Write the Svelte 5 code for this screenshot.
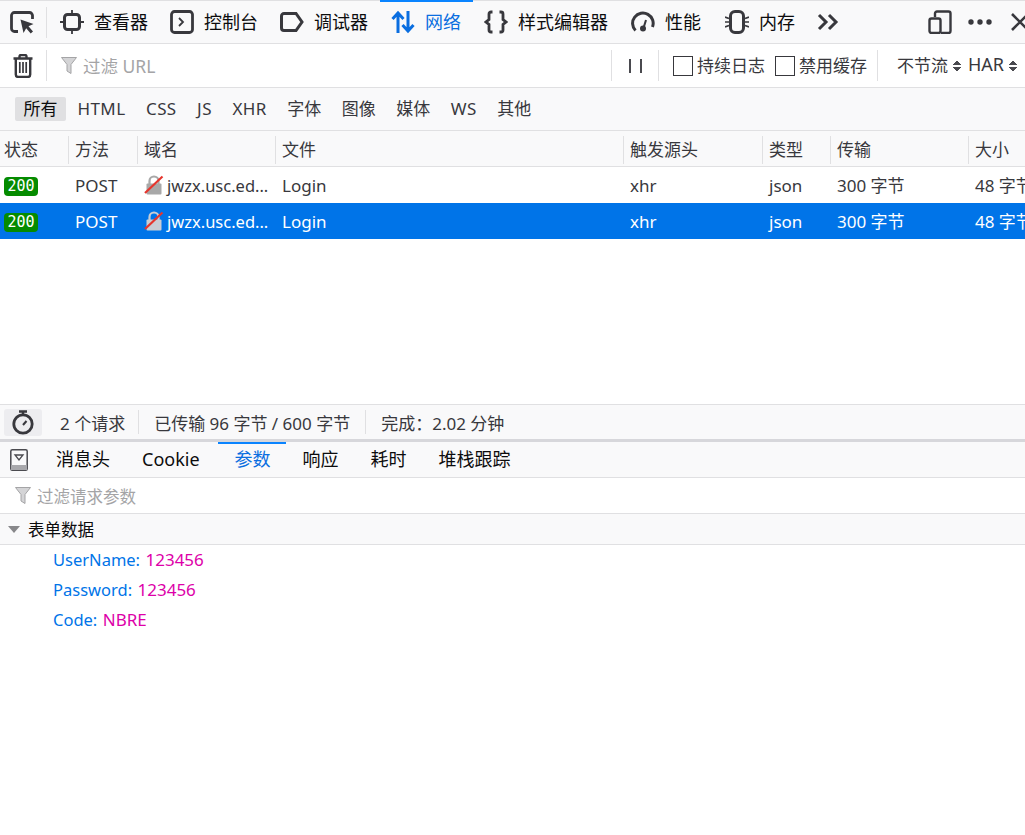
<script>
  const filters = ['HTML', 'CSS', 'JS', 'XHR', '字体', '图像', '媒体', 'WS', '其他'];
  const columns = ['状态', '方法', '域名', '文件', '触发源头', '类型', '传输', '大小'];
  const rows = [{ selected: false }, { selected: true }];
  const detailTabs = ['消息头', 'Cookie', '参数', '响应', '耗时', '堆栈跟踪'];
  const params = [
    ['UserName', '123456'],
    ['Password', '123456'],
    ['Code', 'NBRE']
  ];
</script>

<main>
  <!-- top toolbox -->
  <div class="toolbox">
    <button class="pick" aria-label="pick">
      <svg width="24" height="24" viewBox="0 0 24 24" fill="none" stroke="#38383d" stroke-width="2.800">
        <path d="M8 21.500H4.500a3 3 0 0 1-3-3v-13a3 3 0 0 1 3-3h15a3 3 0 0 1 3 3V9" />
        <path d="M10.500 9.500l13 4.500-5 2.200 4.500 5.300-2.300 2-4.500-5.300L13.500 23z" fill="#38383d" stroke="none" />
      </svg>
    </button>
    <span class="sep tall"></span>
    <div class="tab">
      <svg width="24" height="24" viewBox="0 0 24 24" fill="none" stroke="#38383d" stroke-width="3">
        <rect x="4.500" y="4.500" width="15" height="15" rx="3" />
        <path d="M12 0v3.500M12 20.500V24M0 12h3.500M20.500 12H24" stroke-width="1.800" />
      </svg>
      <span>查看器</span>
    </div>
    <div class="tab">
      <svg width="24" height="24" viewBox="0 0 24 24" fill="none" stroke="#38383d" stroke-width="2.800">
        <rect x="1.500" y="1.500" width="21" height="21" rx="3" />
        <path d="M9 8l4 4-4 4" stroke-width="1.800" />
      </svg>
      <span>控制台</span>
    </div>
    <div class="tab">
      <svg width="24" height="24" viewBox="0 0 24 24" fill="none" stroke="#38383d" stroke-width="3">
        <path d="M4 3.500h12l6 8.500-6 8.500H4a2.500 2.500 0 0 1-2.500-2.500V6A2.500 2.500 0 0 1 4 3.500z" />
      </svg>
      <span>调试器</span>
    </div>
    <div class="tab active">
      <svg width="24" height="24" viewBox="0 0 24 24" fill="none" stroke="#0a6ee0" stroke-width="3">
        <path d="M7 23V3M1.500 9L7 3l5.500 6M17 1v20M11.500 15l5.500 6 5.500-6" />
      </svg>
      <span>网络</span>
    </div>
    <div class="tab">
      <svg width="24" height="24" viewBox="0 0 24 24" fill="none" stroke="#38383d" stroke-width="2.800">
        <path d="M8.500 2H7a2 2 0 0 0-2 2v5.500L2 12l3 2.500V20a2 2 0 0 0 2 2h1.500M15.500 2H17a2 2 0 0 1 2 2v5.500l3 2.500-3 2.500V20a2 2 0 0 1-2 2h-1.500" />
      </svg>
      <span>样式编辑器</span>
    </div>
    <div class="tab perf">
      <svg width="24" height="24" viewBox="0 0 24 24" fill="none" stroke="#38383d" stroke-width="3">
        <path d="M4.500 20.500A10.300 10.300 0 1 1 21.500 17" />
        <circle cx="12" cy="18.500" r="3" fill="#38383d" stroke="none" />
        <path d="M12.500 18l2.500-8" stroke-width="2" />
      </svg>
      <span>性能</span>
    </div>
    <div class="tab mem">
      <svg width="24" height="24" viewBox="0 0 24 24" fill="none" stroke="#38383d" stroke-width="3">
        <rect x="5.500" y="1.500" width="13" height="21" rx="4.500" />
        <path d="M0 7l4 1.500M0 12h4M0 17l4-1.500M24 7l-4 1.500M24 12h-4M24 17l-4-1.500" stroke-width="1.700" />
      </svg>
      <span>内存</span>
    </div>
    <svg class="more" width="22" height="18" viewBox="0 0 22 18" fill="none" stroke="#38383d" stroke-width="3">
      <path d="M2 2l7 7-7 7M12 2l7 7-7 7" />
    </svg>
    <div class="spacer"></div>
    <svg class="dock" width="24" height="24" viewBox="0 0 24 24" fill="none" stroke="#38383d" stroke-width="2.400">
      <path d="M7 7V3.500A2 2 0 0 1 9 1.500h11.500a2 2 0 0 1 2 2V21a2 2 0 0 1-2 2H13" />
      <rect x="1.500" y="8.500" width="11" height="14.500" rx="2" />
    </svg>
    <svg class="dots" width="24" height="6" viewBox="0 0 24 6" fill="#38383d">
      <circle cx="3" cy="3" r="2.700" /><circle cx="12" cy="3" r="2.700" /><circle cx="21" cy="3" r="2.700" />
    </svg>
    <svg class="close" width="20" height="18" viewBox="0 0 20 18" fill="none" stroke="#38383d" stroke-width="2.600">
      <path d="M2 1l16 16M18 1L2 17" />
    </svg>
  </div>

  <!-- url filter -->
  <div class="filterbar">
    <svg class="trash" width="20" height="24" viewBox="0 0 20 24" fill="none" stroke="#38383d" stroke-width="2.400">
      <path d="M0.500 4.500h19M6.500 4V2.500a1.500 1.500 0 0 1 1.500-1.500h4a1.500 1.500 0 0 1 1.500 1.500V4" />
      <path d="M2.800 5v15.500a2.500 2.500 0 0 0 2.500 2.500h9.400a2.500 2.500 0 0 0 2.500-2.500V5" />
      <path d="M6.800 8v11M10 8v11M13.200 8v11" stroke-width="1.700" />
    </svg>
    <span class="sep tall url-sep"></span>
    <svg class="funnel" width="16" height="17" viewBox="0 0 16 17">
      <path d="M0.500 0.500h15l-5.500 7v9l-4-2.500v-6.500z" fill="#d4d4d6" stroke="#a4a4a6" />
    </svg>
    <span class="url-text">过滤 URL</span>
    <div class="spacer"></div>
    <span class="sep tall"></span>
    <span class="pause"><i></i><i></i></span>
    <span class="sep tall"></span>
    <span class="box first"></span><span class="check-label">持续日志</span>
    <span class="box"></span><span class="check-label">禁用缓存</span>
    <span class="sep tall throttle-sep"></span>
    <span class="select">不节流</span><span class="updown"></span>
    <span class="select har">HAR</span><span class="updown"></span>
  </div>

  <!-- request type -->
  <div class="typebar">
    <span class="type on">所有</span>
    {#each filters as f}
      <span class="type" class:latin={/^[A-Z]+$/.test(f)}>{f}</span>
    {/each}
  </div>

  <!-- request table -->
  <div class="thead cols">
    {#each columns as c}
      <div class="th">{c}</div>
    {/each}
  </div>
  <div class="tbody">
    {#each rows as r}
      <div class="tr cols" class:selected={r.selected}>
        <div class="td"><span class="badge">200</span></div>
        <div class="td">POST</div>
        <div class="td domain">
          <svg width="20" height="20" viewBox="0 0 20 20">
            <path d="M5.500 9V6a4.500 4.500 0 0 1 9 0v3" fill="none" stroke={r.selected ? '#c8cdd4' : '#a8a8a8'} stroke-width="2.200" />
            <rect x="2.500" y="8.500" width="15" height="11" rx="1" fill={r.selected ? '#c8cdd4' : '#a8a8a8'} />
            <path d="M1 18L18.500 1.500" stroke="#e5352d" stroke-width="2.200" />
          </svg>
          <span>jwzx.usc.ed...</span>
        </div>
        <div class="td">Login</div>
        <div class="td">xhr</div>
        <div class="td">json</div>
        <div class="td">300 字节</div>
        <div class="td">48 字节</div>
      </div>
    {/each}
  </div>

  <!-- totals -->
  <div class="summary">
    <span class="timer">
      <svg width="22" height="25" viewBox="0 0 22 25" fill="none" stroke="#38383d" stroke-width="2.800">
        <circle cx="11" cy="14" r="9.200" />
        <path d="M7 1.500h8M11 2v3" stroke-width="2.400" />
        <path d="M11 15l3.500-4" stroke-width="2" />
      </svg>
    </span>
    <span class="count">2 个请求</span>
    <span class="sep short"></span>
    <span>已传输 96 字节 / 600 字节</span>
    <span class="sep short last"></span>
    <span>完成：2.02 分钟</span>
  </div>
  <div class="splitter"></div>

  <!-- detail panel -->
  <div class="detail-tabs">
    <svg class="panel-toggle" width="18" height="22" viewBox="0 0 18 22" fill="none">
      <rect x="0.800" y="0.800" width="16.400" height="20.400" rx="1.500" stroke="#4a4a4f" stroke-width="1.500" />
      <rect x="1" y="16" width="16" height="5" fill="#a8a8ac" />
      <path d="M5 6h8l-4 5z" fill="#f9f9fa" stroke="#4a4a4f" stroke-width="1.300" />
    </svg>
    {#each detailTabs as t}
      <div class="dtab" class:active={t === '参数'}>{t}</div>
    {/each}
  </div>
  <div class="param-filter">
    <svg width="16" height="17" viewBox="0 0 16 17">
      <path d="M0.500 0.500h15l-5.500 7v9l-4-2.500v-6.500z" fill="#d4d4d6" stroke="#a4a4a6" />
    </svg>
    <span>过滤请求参数</span>
  </div>
  <div class="section">
    <span class="arrow"></span>
    <span>表单数据</span>
  </div>
  <div class="params">
    {#each params as [k, v]}
      <div class="param"><span class="key">{k}:</span> <span class="val">{v}</span></div>
    {/each}
  </div>
</main>

<style>
  :global(body) {
    margin: 0;
    background: #fff;
  }

  main {
    width: 1025px;
    height: 835px;
    overflow: hidden;
    display: flex;
    flex-direction: column;
    font-family: "Noto Sans", "Noto Sans CJK SC", sans-serif;
    color: #38383d;
    background: #fff;
  }

  .spacer {
    flex: 1;
  }

  .sep {
    width: 1px;
    background: #e0e0e2;
    flex: none;
  }
  .sep.tall {
    height: 31px;
  }
  .sep.short {
    height: 24px;
    margin: 0 15px 0 13px;
  }
  .sep.short.last {
    margin-left: 15px;
  }

  .toolbox {
    height: 42px;
    border-top: 1px solid #e0e0e2;
    border-bottom: 1px solid #e0e0e2;
    background: #f9f9fa;
    display: flex;
    align-items: center;
    flex: none;
    white-space: nowrap;
  }
  .pick {
    border: none;
    background: none;
    padding: 0;
    margin: 0 12px 0 10px;
    width: 24px;
    height: 24px;
  }
  .toolbox > .sep {
    margin-right: 2px;
  }
  .tab {
    height: 42px;
    padding: 0 11px;
    display: flex;
    align-items: center;
    gap: 10px;
    font-size: 18px;
    line-height: 40px;
    color: #0c0c0d;
    box-sizing: border-box;
  }
  .tab.active {
    color: #0a6ee0;
    box-shadow: inset 0 2px 0 #0a84ff;
    margin: -1px 0 0 1px;
    height: 43px;
    padding-right: 12px;
  }
  .tab.perf {
    margin-left: 1px;
  }
  .tab.mem {
    margin-left: 2px;
  }
  .more {
    margin-left: 11px;
  }
  .dock {
    margin-right: 16px;
  }
  .dots {
    margin-right: 18px;
  }
  .close {
    margin-right: -5px;
  }

  .filterbar {
    height: 43px;
    border-bottom: 1px solid #e0e0e2;
    display: flex;
    align-items: center;
    flex: none;
    font-size: 17px;
    line-height: 40px;
    white-space: nowrap;
    padding-right: 7px;
  }
  .trash {
    margin-left: 13px;
    margin-right: 13px;
  }
  .funnel {
    margin-left: 14px;
    margin-right: 6px;
  }
  .url-text {
    color: #a4a4a6;
    font-size: 17.500px;
  }
  .pause {
    display: flex;
    gap: 9px;
    margin: 0 16px 0 17px;
  }
  .pause i {
    display: block;
    width: 2px;
    height: 14px;
    background: #4a4a4f;
  }
  .box {
    width: 18px;
    height: 18px;
    border: 1px solid #38383d;
    background: #fff;
    flex: none;
    margin-right: 4px;
  }
  .box.first {
    margin-left: 14px;
  }
  .check-label {
    margin-right: 11px;
    width: 67px;
  }
  .throttle-sep {
    margin-right: 19px;
  }
  .har {
    margin-left: 6px;
    font-size: 18px;
    line-height: 36px;
    margin-bottom: 3px;
  }
  .updown {
    width: 8px;
    height: 12px;
    margin-left: 5px;
    margin-right: 1px;
    flex: none;
    background:
      linear-gradient(135deg, transparent 50%, #4a4a4f 50%) 0 0 / 4px 5px no-repeat,
      linear-gradient(225deg, transparent 50%, #4a4a4f 50%) 4px 0 / 4px 5px no-repeat,
      linear-gradient(45deg, transparent 50%, #4a4a4f 50%) 0 7px / 4px 5px no-repeat,
      linear-gradient(315deg, transparent 50%, #4a4a4f 50%) 4px 7px / 4px 5px no-repeat;
  }

  .typebar {
    height: 42px;
    border-bottom: 1px solid #e0e0e2;
    background: #f9f9fa;
    display: flex;
    align-items: center;
    gap: 2.500px;
    padding-left: 15px;
    flex: none;
  }
  .type {
    font-size: 17px;
    line-height: 24px;
    padding: 0 9px;
    color: #38383d;
  }
  .type.latin {
    letter-spacing: 0.4px;
  }
  .type.on {
    background: #e0e0e2;
    border-radius: 2px;
    padding: 0 8.500px;
    color: #0c0c0d;
  }

  .cols {
    display: grid;
    grid-template-columns: 69px 69px 138px 348px 139px 68px 138px 100px;
  }
  .thead {
    height: 35px;
    border-bottom: 1px solid #e0e0e2;
    background: #f9f9fa;
    flex: none;
  }
  .th {
    font-size: 17px;
    line-height: 37px;
    padding-left: 6px;
    color: #38383d;
    position: relative;
  }
  .th:first-child {
    padding-left: 4px;
  }
  .th + .th::before {
    content: '';
    position: absolute;
    left: -1px;
    top: 5px;
    bottom: 4px;
    width: 1px;
    background: #e0e0e2;
  }
  .tbody {
    height: 237px;
    flex: none;
  }
  .tr {
    height: 36px;
  }
  .tr.selected {
    background: #0074e8;
    color: #fff;
  }
  .td {
    font-size: 17px;
    line-height: 37px;
    padding-left: 6px;
    white-space: nowrap;
    overflow: hidden;
  }
  .td:first-child {
    padding-left: 4px;
  }
  .domain {
    display: flex;
    align-items: center;
    gap: 3px;
    font-size: 16.500px;
  }
  .badge {
    display: inline-block;
    width: 34px;
    height: 19px;
    line-height: 19px;
    background: #058b00;
    color: #fff;
    border-radius: 4px;
    text-align: center;
    font-family: "DejaVu Sans Mono", monospace;
    font-size: 15px;
    vertical-align: middle;
    position: relative;
    top: -1px;
  }

  .summary {
    height: 34px;
    border-top: 1px solid #e0e0e2;
    background: #f9f9fa;
    display: flex;
    align-items: center;
    font-size: 17px;
    white-space: nowrap;
    flex: none;
  }
  .timer {
    width: 38px;
    height: 27px;
    margin-left: 4px;
    margin-top: 1px;
    background: #ededf0;
    border-radius: 3px;
    display: flex;
    align-items: center;
    justify-content: center;
  }
  .count {
    margin-left: 18px;
  }
  .splitter {
    height: 3px;
    background: #d7d7db;
    flex: none;
  }

  .detail-tabs {
    height: 35px;
    border-bottom: 1px solid #e0e0e2;
    background: #f9f9fa;
    display: flex;
    align-items: stretch;
    flex: none;
    padding-left: 10px;
  }
  .panel-toggle {
    align-self: center;
    margin-right: 12px;
  }
  .dtab {
    font-size: 18px;
    line-height: 34px;
    padding: 0 16px;
    color: #0c0c0d;
    white-space: nowrap;
  }
  .dtab.active {
    color: #0a6ee0;
    width: 68px;
    box-sizing: border-box;
    box-shadow: inset 0 2px 0 #0a84ff;
    padding: 0 0 0 17px;
    margin: 0 1px 0 2px;
  }

  .param-filter {
    height: 35px;
    border-bottom: 1px solid #e0e0e2;
    display: flex;
    align-items: center;
    gap: 6px;
    padding-left: 15px;
    flex: none;
    font-size: 16.500px;
    color: #a4a4a6;
  }
  .section {
    height: 30px;
    border-bottom: 1px solid #e0e0e2;
    background: #f9f9fa;
    display: flex;
    align-items: center;
    padding-left: 8px;
    flex: none;
    font-size: 16.500px;
    color: #0c0c0d;
  }
  .arrow {
    width: 0;
    height: 0;
    border-left: 6px solid transparent;
    border-right: 6px solid transparent;
    border-top: 7px solid #87878a;
    margin-right: 8px;
  }
  .params {
    padding-left: 53px;
    font-size: 17px;
  }
  .param {
    height: 30px;
    line-height: 30px;
  }
  .key {
    color: #0074e8;
    font-size: 16.500px;
  }
  .val {
    color: #dd00a9;
    margin-left: 1px;
  }
</style>
